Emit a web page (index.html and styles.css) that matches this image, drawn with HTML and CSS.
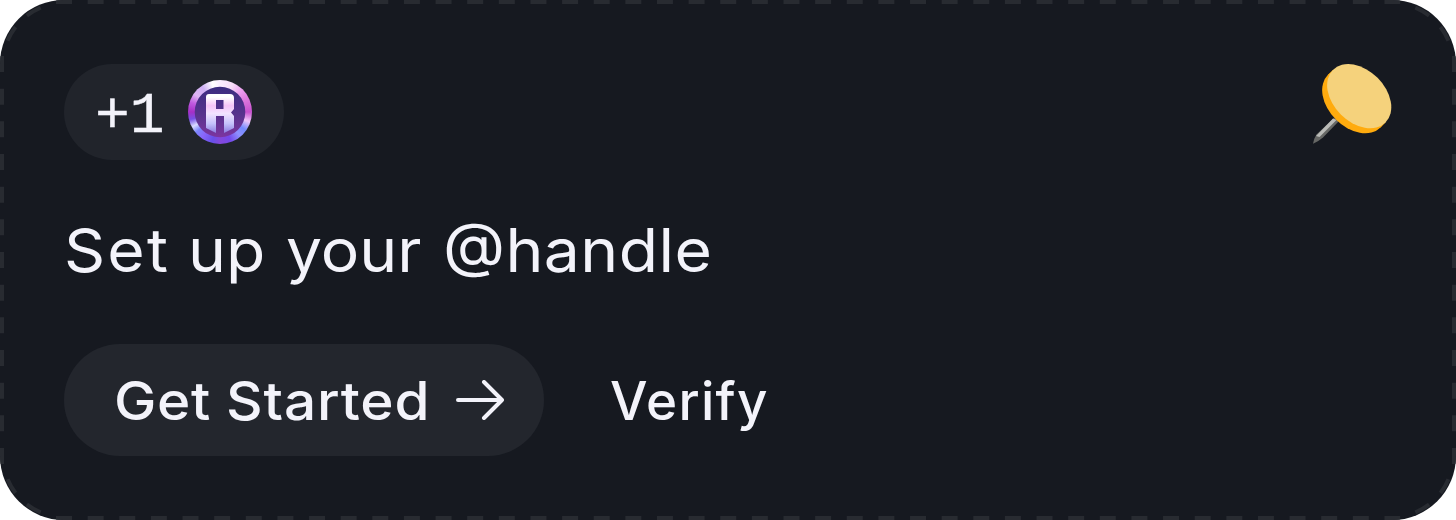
FILE: index.html
```html
<!DOCTYPE html>
<html lang="en">
<head>
<meta charset="utf-8">
<title>Set up your @handle</title>
<link rel="stylesheet" href="styles.css">
</head>
<body>
<main class="card">
  <svg class="card-border" viewBox="0 0 1456 520" aria-hidden="true">
    <g class="dashes-x"><path d="M56 2H1400.2"/><path d="M56 518H1400.2"/></g>
    <g class="dashes-y"><path d="M2 56V464"/><path d="M1454 56V464"/></g>
    <g class="dashes-corner"><path d="M64 3A61 61 0 0 0 3 64"/><path d="M1392 3A61 61 0 0 1 1453 64"/><path d="M64 517A61 61 0 0 1 3 456"/><path d="M1392 517A61 61 0 0 0 1453 456"/></g>
  </svg>
  <header class="card-head">
    <div class="reward">
      <span class="reward-count">+1</span>
      <svg class="coin" viewBox="0 0 64 64" aria-hidden="true">
        <defs>
          <linearGradient id="face" x1="0" y1="0" x2="0" y2="1"><stop stop-color="#3c2c80"/><stop offset=".55" stop-color="#57338d"/><stop offset="1" stop-color="#7c35a0"/></linearGradient>
          <linearGradient id="letter" x1="0" y1="0" x2="0" y2="1"><stop offset=".08" stop-color="#fff"/><stop offset=".3" stop-color="#f5c5f8"/><stop offset=".5" stop-color="#f2e4ff"/><stop offset=".76" stop-color="#c4c2fb"/><stop offset="1" stop-color="#8b7be0"/></linearGradient>
        </defs>
        <foreignObject width="64" height="64"><div class="coin-rim"></div></foreignObject>
        <circle cx="32" cy="32" r="25.3" fill="url(#face)"/>
        <path fill="url(#letter)" fill-rule="evenodd" d="M21 14H42Q46 14 46 18V29L43 32.5L46 36V48L36 53V36H28V53L18 48V17Q18 14 21 14ZM28 20V29H35.5V20Z"/>
      </svg>
    </div>
    <svg class="pin" viewBox="0 0 80 80" aria-hidden="true">
      <path fill="#666765" d="M1 79.8Q1.5 75 4.5 70.5L22 54L27 57L11 73.5Q7 77 1 79.8Z"/>
      <path fill="#babbb8" d="M4 72L21 54.5L24.5 56L7.5 73Z"/>
      <g transform="translate(47.2 32.2) rotate(45)">
        <ellipse cy="7" rx="37.2" ry="26" fill="#ffab0e"/>
        <rect x="-37.2" width="74.4" height="7" fill="#ffab0e"/>
        <ellipse rx="37.2" ry="26" fill="#f5d27c"/>
      </g>
    </svg>
  </header>
  <h1 class="title"><span class="w-set"><span class="wide set">Set</span></span><span class="w-up"><span class="wide">up</span></span><span class="w-your"><span class="wide">your</span></span><span class="w-handle"><span class="wide"><span class="at">@</span>handle</span></span></h1>
  <div class="actions">
    <button class="start"><span class="w-get"><span class="wide">Get</span></span><span class="w-started"><span class="wide">Started</span></span>
      <svg class="arrow" viewBox="0 0 48 40" aria-hidden="true"><path d="M2 20H46M28 2L46 20L28 38"/></svg>
    </button>
    <button class="verify">Verify</button>
  </div>
</main>
</body>
</html>
```
FILE: styles.css
```css
* { box-sizing: border-box; }
body { margin: 0; background: #fff; color: #f3f3fa; font-family: Inter, "Liberation Sans", sans-serif; }
.card { position: relative; width: 1456px; height: 520px; padding: 64px; border-radius: 64px; background: #161920; overflow: hidden; display: flex; flex-direction: column; }
.card-border { position: absolute; inset: 0; width: 100%; height: 100%; pointer-events: none; fill: none; stroke: #282b31; stroke-width: 4; }
.dashes-x { stroke-dasharray: 16 15.63; }
.dashes-y { stroke-dasharray: 16 16.67; }
.dashes-corner { stroke-dasharray: 0 23.9 16 16 16 40; }
.card-head { display: flex; justify-content: space-between; align-items: flex-start; height: 96px; }
.reward { display: flex; align-items: center; justify-content: space-between; width: 220px; height: 96px; padding: 0 32px 0 31px; border-radius: 48px; background: #21242b; }
.reward-count { font: 400 58px/64px "Liberation Mono", monospace; padding-top: 10px; -webkit-text-stroke: 0.4px #f3f3fa; }
.coin { width: 64px; height: 64px; }
.coin-rim { width: 64px; height: 64px; border-radius: 50%; background: conic-gradient(#faedff, #f7dcf8 25deg, #eb9def 45deg, #dc77dc 65deg, #c751cf 90deg, #efc6fa 108deg, #738aff 125deg, #8e91ff 140deg, #7448ea 160deg, #8548db 180deg, #6750ea 195deg, #8965fb 215deg, #7c86fd 230deg, #d9dcff 242deg, #7750e6 256deg, #a52fc6 270deg, #c05ae0 288deg, #dfb5f4 305deg, #ceaff4 325deg, #fff 345deg, #faedff); }
.pin { width: 80px; height: 80px; }
.title { display: flex; align-items: baseline; height: 80px; margin: 50px 0 0; font-size: 60px; line-height: 80px; font-weight: 400; white-space: nowrap; }
.wide { display: inline-block; transform: scaleX(1.07); transform-origin: left; }
.w-handle { letter-spacing: 0.4px; margin-left: -1px; }
.set { letter-spacing: 2px; }
.at { display: inline-block; transform: translateY(-6px); }
.w-set { width: 124px; }
.w-up { width: 98px; }
.w-your { width: 158px; }
.actions { display: flex; gap: 66px; margin-top: 54px; height: 112px; }
button { border: 0; margin: 0; padding: 0; background: none; color: inherit; font: 500 53px/115px Inter, "Liberation Sans", sans-serif; text-align: left; white-space: nowrap; }
.start { display: flex; align-items: center; width: 480px; height: 112px; padding-left: 50px; border-radius: 56px; background: #23262d; }
.w-get { width: 112px; letter-spacing: 0.6px; }
.w-started { width: 230px; letter-spacing: 0.8px; }
.verify { letter-spacing: 1.3px; }
.start .w-get, .start .w-started { padding-top: 3px; }
.arrow { flex: none; width: 48px; height: 40px; fill: none; stroke: #f3f3fa; stroke-width: 4; stroke-linecap: round; stroke-linejoin: round; }
```
